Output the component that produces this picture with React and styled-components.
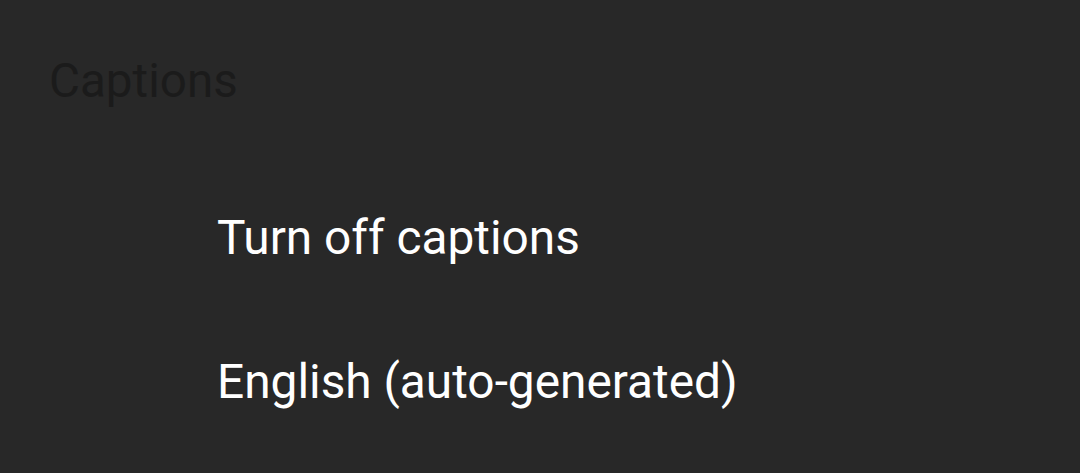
import React from "react";
import styled, { createGlobalStyle } from "styled-components";

const GlobalStyle = createGlobalStyle`
  html, body {
    margin: 0;
    padding: 0;
    background: #282828;
  }
`;

const Sheet = styled.div`
  width: 1080px;
  height: 473px;
  background: #282828;
  font-family: Roboto, "Noto Sans", sans-serif;
  overflow: hidden;
  box-sizing: border-box;
  padding: 51px 0 0 49px;
`;

const Heading = styled.div`
  color: #1b1b1b;
  font-size: 47.6px;
  line-height: 60px;
`;

const List = styled.div`
  display: flex;
  flex-direction: column;
  margin-top: 97px;
  padding-left: 168px;
  gap: 84px;
`;

const Option = styled.div`
  color: #ffffff;
  font-size: 47.8px;
  line-height: 60px;
`;

const options = ["Turn off captions", "English (auto-generated)"];

export default function App() {
  return (
    <Sheet>
      <GlobalStyle />
      <Heading>Captions</Heading>
      <List>
        {options.map((label) => (
          <Option key={label}>{label}</Option>
        ))}
      </List>
    </Sheet>
  );
}
